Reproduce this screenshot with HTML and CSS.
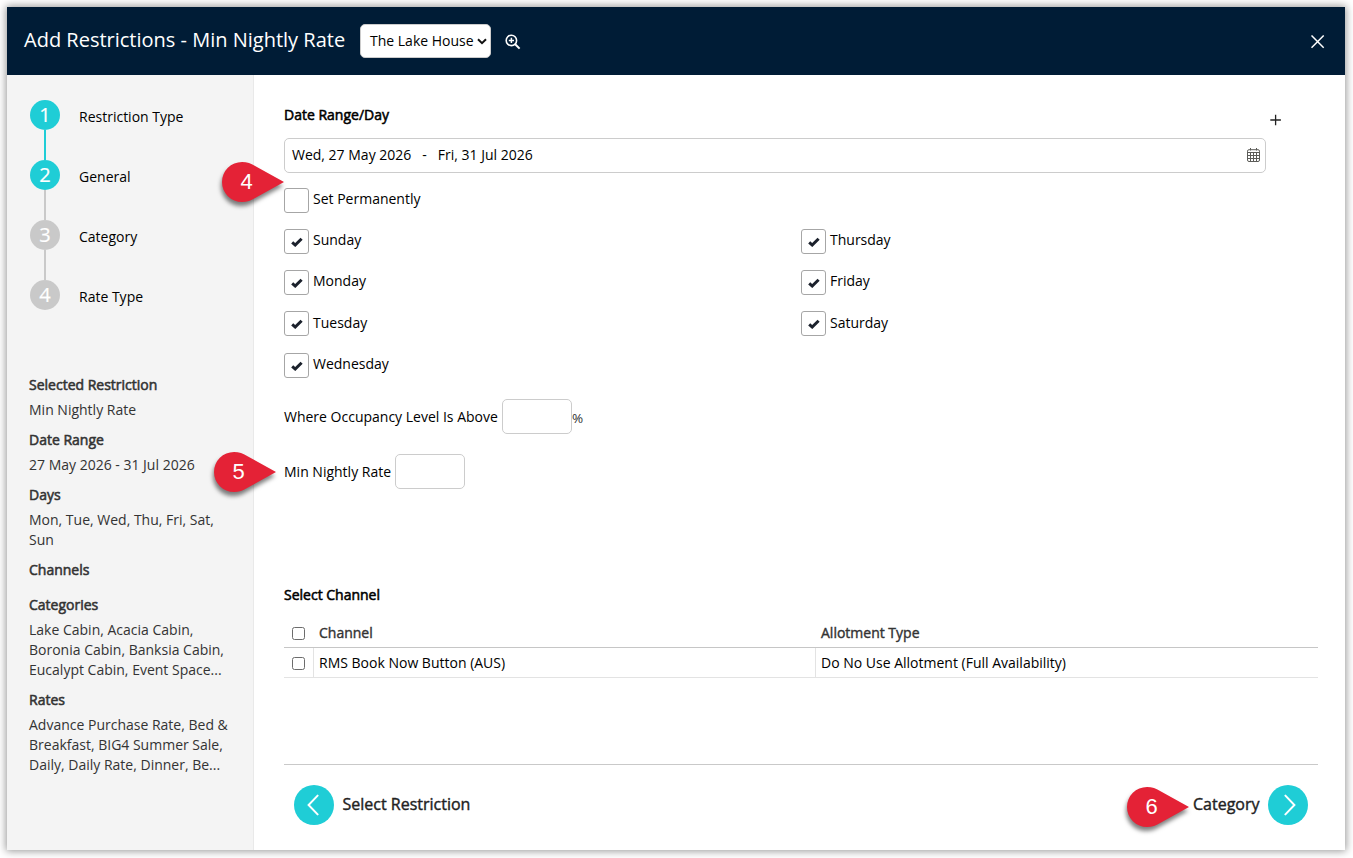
FILE: index.html
```html
<!DOCTYPE html>
<html lang="en">
<head>
<meta charset="utf-8">
<title>Add Restrictions</title>
<link rel="stylesheet" href="styles.css">
</head>
<body>
<svg width="0" height="0" class="defs">
  <symbol id="tick" viewBox="0 0 12 10"><path d="M1.2 5.3 L4.2 8 L10.6 1.7" fill="none" stroke="#1b212c" stroke-width="3"/></symbol>
  <symbol id="pin" viewBox="0 0 64 42"><path d="M21 1 A20 20 0 0 0 21 41 C26 41 30 39.6 35 36.5 L63 21 L35 5.5 C30 2.4 26 1 21 1 Z" fill="#e42236"/></symbol>
</svg>
<div class="dialog">
  <header class="header">
    <h1 class="title">Add Restrictions - Min Nightly Rate</h1>
    <div class="select"><span>The Lake House</span>
      <svg width="10" height="7" viewBox="0 0 10 7"><path d="M1 1.2 L5 5.2 L9 1.2" fill="none" stroke="#111" stroke-width="2"/></svg>
    </div>
    <svg class="search" width="16" height="16" viewBox="0 0 16 16" fill="none" stroke="#fff"><circle cx="6.4" cy="6.4" r="5.2" stroke-width="1.6"/><path d="M6.4 3.8v5.2M3.8 6.4H9" stroke-width="1.5"/><path d="M10.2 10.2 L14.6 14.6" stroke-width="2"/></svg>
    <svg class="close" width="14" height="14" viewBox="0 0 14 14"><path d="M.5 .5 L12.7 12.7 M12.7 .5 L.5 12.7" stroke="#fff" stroke-width="1.5"/></svg>
  </header>
  <div class="body">
    <aside class="sidebar">
      <ol class="steps">
        <li class="step done"><span class="num">1</span><span>Restriction Type</span></li>
        <li class="step done last-done"><span class="num">2</span><span>General</span></li>
        <li class="step"><span class="num">3</span><span>Category</span></li>
        <li class="step"><span class="num">4</span><span>Rate Type</span></li>
      </ol>
      <div class="summary">
        <h3>Selected Restriction</h3><p>Min Nightly Rate</p>
        <h3>Date Range</h3><p>27 May 2026 - 31 Jul 2026</p>
        <h3>Days</h3><p>Mon, Tue, Wed, Thu, Fri, Sat,<br>Sun</p>
        <h3>Channels</h3><p></p>
        <h3>Categories</h3><p>Lake Cabin, Acacia Cabin,<br>Boronia Cabin, Banksia Cabin,<br>Eucalypt Cabin, Event Space...</p>
        <h3>Rates</h3><p>Advance Purchase Rate, Bed &amp;<br>Breakfast, BIG4 Summer Sale,<br>Daily, Daily Rate, Dinner, Be...</p>
      </div>
    </aside>
    <main class="main">
      <div class="heading-row">
        <h2>Date Range/Day</h2>
        <svg class="plus" width="12" height="12" viewBox="0 0 12 12"><path d="M5.6 .7v10.6M.3 6h10.6" stroke="#222" stroke-width="1.3"/></svg>
      </div>
      <div class="daterange">
        <span>Wed, 27 May 2026</span><span class="dash">-</span><span>Fri, 31 Jul 2026</span>
        <svg class="calendar" width="13" height="14" viewBox="0 0 13 14" fill="none" stroke="#5c5c58"><rect x=".5" y="1.7" width="12" height="11.8" rx="1.5"/><path d="M.5 4.5h12M.5 7.5h12M.5 10.5h12M3.5 4.5v9M6.5 4.5v9M9.5 4.5v9"/><path d="M3.5 0v2.5M9.5 0v2.5"/></svg>
      </div>
      <div class="checks">
        <div class="check"><span class="box"></span><span class="day">Set Permanently</span></div>
        <div class="check-columns">
          <div class="check-col">
            <div class="check"><span class="box"><svg><use href="#tick"/></svg></span><span class="day">Sunday</span></div>
            <div class="check"><span class="box"><svg><use href="#tick"/></svg></span><span class="day">Monday</span></div>
            <div class="check"><span class="box"><svg><use href="#tick"/></svg></span><span class="day">Tuesday</span></div>
            <div class="check"><span class="box"><svg><use href="#tick"/></svg></span><span class="day">Wednesday</span></div>
          </div>
          <div class="check-col">
            <div class="check"><span class="box"><svg><use href="#tick"/></svg></span><span class="day">Thursday</span></div>
            <div class="check"><span class="box"><svg><use href="#tick"/></svg></span><span class="day">Friday</span></div>
            <div class="check"><span class="box"><svg><use href="#tick"/></svg></span><span class="day">Saturday</span></div>
          </div>
        </div>
      </div>
      <div class="field"><label>Where Occupancy Level Is Above</label><span class="input"></span><span class="percent">%</span></div>
      <div class="field"><label>Min Nightly Rate</label><span class="input"></span></div>
      <h2 class="channel-title">Select Channel</h2>
      <div class="table">
        <div class="row head"><span class="c1"><i class="cb"></i></span><span class="c2">Channel</span><span class="c3">Allotment Type</span></div>
        <div class="row"><span class="c1"><i class="cb"></i></span><span class="c2">RMS Book Now Button (AUS)</span><span class="c3">Do No Use Allotment (Full Availability)</span></div>
      </div>
      <footer class="footer">
        <div class="nav"><span class="circle prev"><svg width="12" height="22" viewBox="0 0 12 22"><path d="M10.6 1.6 L1.6 11 L10.6 20.4"/></svg></span><span class="nav-label">Select Restriction</span></div>
        <div class="nav"><span class="nav-label">Category</span><span class="circle next"><svg width="12" height="22" viewBox="0 0 12 22"><path d="M1.4 1.6 L10.4 11 L1.4 20.4"/></svg></span></div>
      </footer>
    </main>
  </div>
</div>
<div class="pin pin-4"><svg width="64" height="42"><use href="#pin"/></svg><span>4</span></div>
<div class="pin pin-5"><svg width="64" height="42"><use href="#pin"/></svg><span>5</span></div>
<div class="pin pin-6"><svg width="64" height="42"><use href="#pin"/></svg><span>6</span></div>
</body>
</html>
```
FILE: styles.css
```css
* { box-sizing: border-box; }
body {
  margin: 0;
  padding: 7px 8px 8px 7px;
  height: 858px;
  overflow: hidden;
  position: relative;
  background: #fff;
  font: 14px/20px "Open Sans", sans-serif;
  color: #000;
}
.defs { position: absolute; }
svg { display: block; flex: none; }
h1, h2, h3, p, ol { margin: 0; padding: 0; font-weight: 400; }
h2, h3 { font-size: 14px; -webkit-text-stroke: .55px currentColor; }
.dialog {
  height: 843px;
  display: flex;
  flex-direction: column;
  background: #fff;
  box-shadow: 0 0 8px 1px rgba(0, 0, 0, .42);
}
.header {
  height: 68px;
  display: flex;
  align-items: center;
  padding: 0 20px 0 17px;
  background: #001c36;
  color: #fff;
}
.title { font-size: 20px; line-height: 28px; width: 336px; white-space: nowrap; padding-bottom: 2px; }
.select {
  width: 131px;
  height: 34px;
  display: flex;
  align-items: center;
  justify-content: space-between;
  padding: 0 3px 0 9px;
  background: #fff;
  border: 1px solid #ccc;
  border-radius: 5px;
  color: #000;
  white-space: nowrap;
}
.search { margin: 1px 0 0 14px; }
.close { margin: 1px 0 0 auto; }
.body { flex: 1; display: flex; min-height: 0; }
.sidebar {
  width: 247px;
  background: #f4f4f4;
  border-right: 1px solid #e9e9e9;
  padding: 25px 0 0 22px;
}
.steps { list-style: none; padding-left: 1px; }
.step { height: 60px; display: flex; line-height: 34px; gap: 19px; position: relative; }
.step:not(:last-child)::before {
  content: "";
  position: absolute;
  left: 14px;
  top: 30px;
  width: 2px;
  height: 30px;
  background: #c9c9c9;
}
.step.done:not(.last-done)::before { background: #1fcdd6; }
.num {
  width: 30px;
  height: 30px;
  border-radius: 50%;
  background: #c9c9c9;
  color: #fff;
  font-size: 20px;
  line-height: 30px;
  text-align: center;
  -webkit-text-stroke: .2px #fff;
}
.done .num { background: #1fcdd6; }
.summary { display: flex; flex-direction: column; margin-top: 35px; color: #333; white-space: nowrap; }
.summary h3 { margin-bottom: 5px; }
.summary p { margin-bottom: 10px; }
.main { flex: 1; display: flex; flex-direction: column; padding: 30px 27px 0 30px; }
.heading-row { display: flex; justify-content: space-between; padding-right: 36px; height: 33px; }
.plus { margin-top: 9px; }
.daterange {
  width: 982px;
  height: 35px;
  display: flex;
  align-items: center;
  padding: 0 5px 2px 7px;
  border: 1px solid #ccc;
  border-radius: 5px;
}
.dash { margin: 0 11px; }
.calendar { margin: 1px 0 0 auto; }
.checks { margin-top: 15px; }
.check { height: 41.15px; display: flex; gap: 4px; line-height: 22px; }
.check-columns { display: flex; }
.check-col { width: 517px; }
.day { padding-top: .15px; }
.box {
  width: 25px;
  height: 25px;
  border: 1px solid #a6a6a6;
  border-radius: 3px;
  padding: 7px 0 0 6px;
}
.box svg { width: 12px; height: 10px; }
.field { display: flex; align-items: center; gap: 4px; height: 35px; margin-top: 5.25px; }
.field + .field { margin-top: 20px; }
.field label { padding-top: 1px; }
.input { width: 70px; height: 35px; border: 1px solid #ccc; border-radius: 5px; }
.percent { margin: 3px 0 0 -4px; font-size: 13.5px; color: #333; }
.channel-title { margin: 96px 0 13px; }
.row { display: flex; height: 30px; line-height: 30px; border-bottom: 1px solid #e3e3e3; }
.head { border-color: #c6c6c6; color: #333; -webkit-text-stroke: .4px currentColor; }
.c1, .c2 { border-right: 1px solid #e3e3e3; }
.head .c1, .head .c2 { border-color: transparent; }
.c1 { width: 30px; padding: 9px 0 0 8px; }
.c2 { width: 502px; padding-left: 5px; }
.c3 { padding-left: 5px; }
.cb { display: block; width: 13px; height: 13px; border: 1px solid #6c6c6c; border-radius: 2.5px; }
.footer {
  margin-top: 86px;
  border-top: 1px solid #c9c9c9;
  padding: 20px 10px 0;
  display: flex;
  justify-content: space-between;
}
.nav { display: flex; align-items: center; gap: 8.5px; font-size: 16px; line-height: 38px; color: #222; -webkit-text-stroke: .4px currentColor; }
.nav-label { padding-bottom: 2px; }
.circle { width: 40px; height: 40px; border-radius: 50%; background: #1fcdd6; display: flex; align-items: center; justify-content: center; }
.circle.prev svg { margin-right: 2px; }
.circle.next svg { margin-left: 4px; }
.circle path { fill: none; stroke: #fff; stroke-width: 2; stroke-linecap: round; }
.pin { position: absolute; width: 64px; height: 42px; }
.pin svg { filter: drop-shadow(-1px 4px 2px rgba(0, 0, 0, .5)); }
.pin span {
  position: absolute;
  left: 0;
  top: 0;
  width: 51px;
  text-align: center;
  color: #fff;
  font: 22px/42px "Liberation Sans", sans-serif;
}
.pin-4 { left: 221px; top: 161px; }
.pin-5 { left: 213px; top: 451px; }
.pin-6 { left: 1126px; top: 786px; }
```
